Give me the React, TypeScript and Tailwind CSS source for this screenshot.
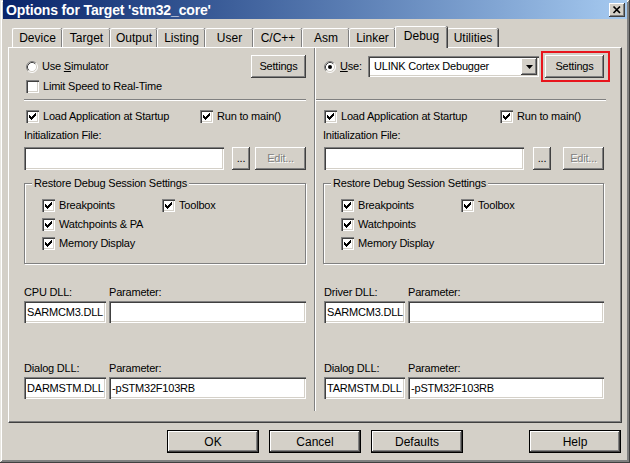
import React from "react";

const raised =
  "shadow-[inset_-1px_-1px_#404040,inset_1px_1px_#ffffff,inset_-2px_-2px_#808080,inset_2px_2px_#d4d0c8]";
const sunken =
  "shadow-[inset_1px_1px_#808080,inset_2px_2px_#404040,inset_-1px_-1px_#ffffff,inset_-2px_-2px_#d4d0c8]";
const bigBtn =
  "shadow-[inset_0_0_0_1px_#000000,inset_-2px_-2px_#404040,inset_2px_2px_#ffffff,inset_-3px_-3px_#808080]";

function Check({ checked = true }: { checked?: boolean }) {
  return (
    <div className={`relative w-[13px] h-[13px] shrink-0 bg-white ${sunken}`}>
      {checked && (
        <svg width="13" height="13" className="absolute inset-0" shapeRendering="crispEdges">
          {[
            [3, 5],
            [4, 6],
            [5, 7],
            [6, 6],
            [7, 5],
            [8, 4],
            [9, 3],
          ].map(([x, y]) => (
            <rect key={x} x={x} y={y} width="1" height="3" fill="#000" />
          ))}
        </svg>
      )}
    </div>
  );
}

function Radio({ checked = false }: { checked?: boolean }) {
  return (
    <svg width="12" height="12" className="shrink-0">
      <circle cx="6" cy="6" r="5" fill="#ffffff" />
      <path d="M2.11 9.89 A5.5 5.5 0 0 1 9.89 2.11" stroke="#808080" strokeWidth="1" fill="none" />
      <path d="M2.82 9.18 A4.5 4.5 0 0 1 9.18 2.82" stroke="#404040" strokeWidth="1" fill="none" />
      <path d="M9.89 2.11 A5.5 5.5 0 0 1 2.11 9.89" stroke="#ffffff" strokeWidth="1" fill="none" />
      <path d="M9.18 2.82 A4.5 4.5 0 0 1 2.82 9.18" stroke="#d4d0c8" strokeWidth="1" fill="none" />
      {checked && <circle cx="6" cy="6" r="2" fill="#000" />}
    </svg>
  );
}

function Btn({
  children,
  className = "",
  disabled = false,
}: {
  children: React.ReactNode;
  className?: string;
  disabled?: boolean;
}) {
  return (
    <div
      className={`flex items-center justify-center bg-[#d4d0c8] text-[11px] tracking-[-0.2px] ${raised} ${
        disabled ? "text-[#808080] [text-shadow:1px_1px_0_#ffffff]" : "text-black"
      } ${className}`}
    >
      {children}
    </div>
  );
}

function Input({ value = "", className = "" }: { value?: string; className?: string }) {
  return (
    <div
      className={`flex items-center bg-white pl-[3px] pr-[2px] text-[11px] tracking-[-0.2px] whitespace-nowrap overflow-hidden ${sunken} ${className}`}
    >
      {value}
    </div>
  );
}

function CheckLabel({ label, className = "" }: { label: string; className?: string }) {
  return (
    <div className={`flex items-center gap-[4px] ${className}`}>
      <Check />
      <span>{label}</span>
    </div>
  );
}

function Group({ items, className = "" }: { items: [string, string | null][]; className?: string }) {
  return (
    <div
      className={`relative mt-[13px] h-[81px] border border-[#808080] shadow-[inset_1px_1px_#ffffff,1px_1px_#ffffff] ${className}`}
    >
      <div className="absolute -top-[8px] left-[7px] px-[2px] bg-[#d4d0c8] leading-[14px]">
        Restore Debug Session Settings
      </div>
      <div className="pt-[12px] pl-[17px] flex flex-col">
        {items.map(([a, b]) => (
          <div key={a} className="h-[19px] flex items-center">
            <CheckLabel label={a} className="w-[120px]" />
            {b && <CheckLabel label={b} />}
          </div>
        ))}
      </div>
    </div>
  );
}

const tabs: [string, number][] = [
  ["Device", 50],
  ["Target", 48],
  ["Output", 47],
  ["Listing", 48],
  ["User", 48],
  ["C/C++", 49],
  ["Asm", 47],
  ["Linker", 46],
  ["Debug", 52],
  ["Utilities", 51],
];

export default function App() {
  return (
    <div
      className={`w-[630px] h-[463px] bg-[#d4d0c8] px-[3px] flex flex-col font-['Liberation_Sans',Arial,sans-serif] text-black shadow-[inset_-1px_-1px_#404040,inset_1px_1px_#e8e6e0,inset_-2px_-2px_#808080,inset_2px_2px_#ffffff,inset_-3px_-3px_#808080]`}
    >
      {/* Title bar */}
      <div className="h-[19px] shrink-0 flex items-center bg-gradient-to-r from-[#0a246a] to-[#a6caf0] pl-[3px] pr-[2px]">
        <span className="text-white font-bold text-[14px] tracking-[-0.15px] leading-none">
          Options for Target 'stm32_core'
        </span>
        <div className={`ml-auto w-[16px] h-[14px] bg-[#d4d0c8] ${raised} flex items-center justify-center`}>
          <svg width="16" height="14">
            <path d="M4.5 3.5 L11 10 M11 3.5 L4.5 10" stroke="#000" strokeWidth="1.7" />
          </svg>
        </div>
      </div>

      {/* Tabs */}
      <div className="h-[28px] shrink-0 flex items-end pl-[9px] text-[12px]">
        {tabs.map(([t, w]) => {
          const sel = t === "Debug";
          return (
            <div
              key={t}
              style={{ width: w }}
              className={`flex items-center justify-center rounded-t-[2px] border-t border-l border-white bg-[#d4d0c8] shadow-[inset_-1px_0_#808080,1px_0_#404040] ${
                sel ? "h-[22px] -mb-[1px] relative z-10 pb-[3px]" : "h-[19px]"
              }`}
            >
              {t}
            </div>
          );
        })}
      </div>

      {/* Panel */}
      <div className="ml-[5px] w-[614px] h-[376px] shrink-0 border-t border-l border-white border-r border-b border-r-[#404040] border-b-[#404040] shadow-[inset_-1px_-1px_#808080] flex text-[11px] tracking-[-0.2px]">
        {/* Left column */}
        <div className="w-[305px] pl-[15px] pr-[8px] pt-[7px] flex flex-col">
          <div className="h-[23px] flex items-center">
            <div className="ml-[2px] flex items-center gap-[4px]">
              <Radio />
              <span>
                Use <u>S</u>imulator
              </span>
            </div>
            <Btn className="ml-auto w-[55px] h-[23px]">Settings</Btn>
          </div>
          <div className="h-[16px] flex items-center ml-[2px] gap-[4px]">
            <Check checked={false} />
            <span>Limit Speed to Real-Time</span>
          </div>
          <div className="mt-[5px] h-[2px] border-t border-t-[#808080] border-b border-b-white" />
          <div className="mt-[7px] h-[16px] flex items-center">
            <CheckLabel label="Load Application at Startup" className="ml-[2px] w-[174px]" />
            <CheckLabel label="Run to main()" />
          </div>
          <div className="mt-[3px] h-[16px] flex items-center">Initialization File:</div>
          <div className="mt-[4px] h-[23px] flex">
            <Input className="w-[200px]" />
            <Btn className="ml-[8px] w-[18px]">...</Btn>
            <Btn className="ml-[5px] w-[51px]" disabled>
              Edit...
            </Btn>
          </div>
          <Group
            className="w-[282px]"
            items={[
              ["Breakpoints", "Toolbox"],
              ["Watchpoints & PA", null],
              ["Memory Display", null],
            ]}
          />
          <div className="mt-[20px] h-[16px] flex items-center">
            <span className="w-[85px]">CPU DLL:</span>
            <span>Parameter:</span>
          </div>
          <div className="mt-[1px] h-[22px] flex gap-[3px]">
            <Input className="w-[82px]" value="SARMCM3.DLL" />
            <Input className="w-[197px]" />
          </div>
          <div className="mt-[37px] h-[16px] flex items-center">
            <span className="w-[85px]">Dialog DLL:</span>
            <span>Parameter:</span>
          </div>
          <div className="mt-[1px] h-[22px] flex gap-[3px]">
            <Input className="w-[82px]" value="DARMSTM.DLL" />
            <Input className="w-[197px]" value="-pSTM32F103RB" />
          </div>
        </div>

        {/* Divider */}
        <div className="w-[2px] h-[363px] border-l border-l-[#808080] border-r border-r-white" />

        {/* Right column */}
        <div className="w-[304px] pl-[8px] pt-[7px] flex flex-col">
          <div className="h-[23px] flex items-center">
            <Radio checked />
            <span className="ml-[4px] w-[28px]">
              <u>U</u>se:
            </span>
            <div className={`w-[171px] h-[21px] bg-white flex items-center ${sunken} pl-[6px] pr-[2px]`}>
              <span className="flex-1">ULINK Cortex Debugger</span>
              <div className={`w-[16px] h-[17px] bg-[#d4d0c8] ${raised} flex items-center justify-center`}>
                <svg width="7" height="4">
                  <polygon points="0,0 7,0 3.5,4" fill="#000" />
                </svg>
              </div>
            </div>
            <div className="relative ml-[6px]">
              <Btn className="w-[59px] h-[23px]">Settings</Btn>
              <div className="absolute -left-[4px] -right-[6px] -top-[4px] -bottom-[4px] border-2 border-[#e8141c]" />
            </div>
          </div>
          <div className="h-[16px]" />
          <div className="-ml-[8px] w-[290px] mt-[5px] h-[2px] border-t border-t-[#808080] border-b border-b-white" />
          <div className="mt-[7px] h-[16px] flex items-center">
            <CheckLabel label="Load Application at Startup" className="w-[176px]" />
            <CheckLabel label="Run to main()" />
          </div>
          <div className="mt-[3px] h-[16px] flex items-center -ml-[1px]">Initialization File:</div>
          <div className="mt-[4px] h-[23px] flex">
            <Input className="w-[200px]" />
            <Btn className="ml-[9px] w-[18px]">...</Btn>
            <Btn className="ml-[12px] w-[41px]" disabled>
              Edit...
            </Btn>
          </div>
          <Group
            className="-ml-[1px] w-[281px]"
            items={[
              ["Breakpoints", "Toolbox"],
              ["Watchpoints", null],
              ["Memory Display", null],
            ]}
          />
          <div className="mt-[20px] h-[16px] flex items-center">
            <span className="w-[84px]">Driver DLL:</span>
            <span>Parameter:</span>
          </div>
          <div className="mt-[1px] h-[22px] flex gap-[3px]">
            <Input className="w-[81px]" value="SARMCM3.DLL" />
            <Input className="w-[196px]" />
          </div>
          <div className="mt-[37px] h-[16px] flex items-center">
            <span className="w-[84px]">Dialog DLL:</span>
            <span>Parameter:</span>
          </div>
          <div className="mt-[1px] h-[22px] flex gap-[3px]">
            <Input className="w-[81px]" value="TARMSTM.DLL" />
            <Input className="w-[196px]" value="-pSTM32F103RB" />
          </div>
        </div>
      </div>

      {/* Bottom buttons */}
      <div className="mt-[7px] flex pl-[164px] text-[12px]">
        <div className={`w-[92px] h-[23px] flex items-center justify-center ${bigBtn}`}>OK</div>
        <div className={`ml-[10px] w-[92px] h-[23px] flex items-center justify-center ${bigBtn}`}>Cancel</div>
        <div className={`ml-[10px] w-[92px] h-[23px] flex items-center justify-center ${bigBtn}`}>Defaults</div>
        <div className={`ml-[66px] w-[92px] h-[23px] flex items-center justify-center ${bigBtn}`}>Help</div>
      </div>
    </div>
  );
}
